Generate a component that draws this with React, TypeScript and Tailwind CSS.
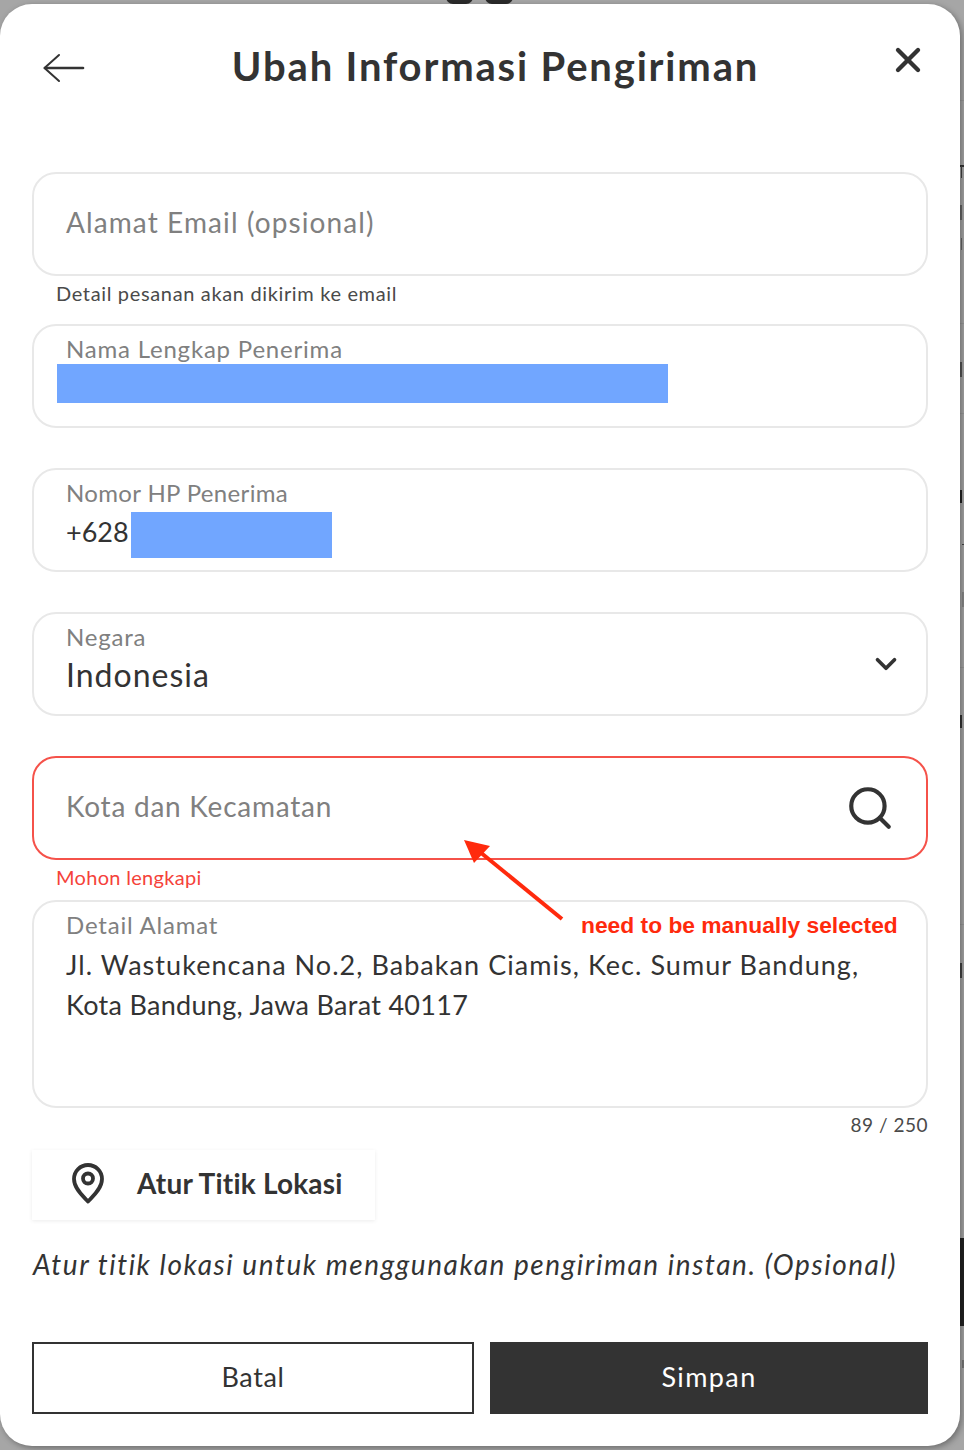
import { ChevronDown, Search, X } from 'lucide-react';

const font = "font-['Lato','Noto_Sans',sans-serif]";

// page text and rules that peek out to the right of the sheet
const edgeBits = [
  'top-[100px] h-[1px] w-[4px] bg-[#999999]',
  'top-[165px] h-[2px] w-[4px] bg-[#333333]',
  'top-[166px] left-[961px] h-[12px] w-[1px] bg-[#444444]',
  'top-[205px] h-[15px] w-[2px] bg-[#666666]',
  'top-[238px] left-[961px] h-[12px] w-[1px] bg-[#666666]',
  'top-[323px] h-[1px] w-[4px] bg-[#999999]',
  'top-[362px] h-[15px] w-[2px] bg-[#555555]',
  'top-[413px] h-[1px] w-[4px] bg-[#999999]',
  'top-[490px] h-[13px] w-[2px] bg-[#222222]',
  'top-[544px] left-[962px] h-[1px] w-[2px] bg-[#444444]',
  'top-[592px] left-[962px] h-[15px] w-[2px] bg-[#888888]',
  'top-[667px] h-[1px] w-[4px] bg-[#999999]',
  'top-[715px] h-[13px] w-[2px] bg-[#333333]',
  'top-[924px] h-[1px] w-[4px] bg-[#999999]',
  'top-[963px] h-[15px] w-[2px] bg-[#444444]',
  'top-[1360px] left-[962px] h-[8px] w-[2px] bg-[#777777]',
];

function Field({
  label,
  labelClass = 'tracking-[0.8px]',
  children,
  right,
  error,
  tall,
}: {
  label?: string;
  labelClass?: string;
  children?: React.ReactNode;
  right?: React.ReactNode;
  error?: boolean;
  tall?: boolean;
}) {
  return (
    <div
      className={`flex items-start justify-between rounded-[24px] border-2 bg-white ${tall ? 'h-[208px]' : 'h-[104px]'} ${
        error ? 'border-[#f5524a]' : 'border-[#e8e8e8]'
      }`}
    >
      <div className="min-w-0 flex-1 pl-[32px] pt-[9px]">
        {label && <div className={`text-[24px] leading-[28px] text-[#808080] ${labelClass}`}>{label}</div>}
        {children}
      </div>
      {right}
    </div>
  );
}

function Helper({ children, error }: { children: React.ReactNode; error?: boolean }) {
  return (
    <div
      className={`h-[48px] pl-[24px] pt-[5px] text-[20px] leading-[24px] ${
        error ? 'tracking-[0.3px] text-[#f5423a]' : 'tracking-[0.65px] text-[#4a4a4a]'
      }`}
    >
      {children}
    </div>
  );
}

export default function App() {
  return (
    <div className={`relative h-[1450px] w-[964px] overflow-hidden bg-[#a6a6a6] pt-[4px] ${font}`}>
      <div className="absolute left-[446px] top-[-10px] h-[14px] w-[27px] rounded-full bg-[#2b2b2b]" />
      <div className="absolute left-[485px] top-[-10px] h-[14px] w-[28px] rounded-full bg-[#2b2b2b]" />
      <div className="absolute left-[960px] top-[1238px] h-[88px] w-[4px] bg-[#222222]" />
      {edgeBits.map((bit) => (
        <div key={bit} className={`absolute left-[960px] ${bit}`} />
      ))}

      <div className="relative h-[1442px] w-[960px] rounded-[32px] bg-white shadow-[2px_2px_6px_rgba(0,0,0,0.35)]">
        <div className="relative flex h-[168px] justify-center pl-[31px]">
          <svg viewBox="0 0 44 32" className="absolute left-[42px] top-[48px] h-[32px] w-[44px]" fill="none" stroke="#333333" strokeLinecap="round" strokeLinejoin="round">
            <path d="M17 3 L2.5 16 L17 29" strokeWidth="2" />
            <path d="M3 16 H41" strokeWidth="2.6" />
          </svg>
          <h1 className="pt-[36px] text-[40px] font-bold leading-[52px] tracking-[1.82px] text-[#333333]">Ubah Informasi Pengiriman</h1>
          <X className="absolute right-[32px] top-[36px] h-[40px] w-[40px] text-[#333333]" strokeWidth={2.6} />
        </div>

        <div className="px-[32px]">
          <Field>
            <div className="pt-[20px] text-[28px] leading-[38px] tracking-[1.1px] text-[#808080]">Alamat Email (opsional)</div>
          </Field>
          <Helper>Detail pesanan akan dikirim ke email</Helper>

          <Field label="Nama Lengkap Penerima">
            <div className="ml-[-9px] mt-[1px] h-[39px] w-[611px] bg-[#71a6ff]" />
          </Field>
          <div className="h-[40px]" />

          <Field label="Nomor HP Penerima" labelClass="tracking-[0.35px]">
            <div className="mt-[5px] flex items-start">
              <span className="mt-[3px] text-[27px] leading-[34px] text-[#333333]">+628</span>
              <div className="ml-[2px] h-[46px] w-[201px] bg-[#71a6ff]" />
            </div>
          </Field>
          <div className="h-[40px]" />

          <Field
            label="Negara"
            right={<ChevronDown className="mr-[23px] mt-[33px] h-[34px] w-[34px] text-[#333333]" strokeWidth={2.6} />}
          >
            <div className="mt-[4px] text-[32px] leading-[40px] tracking-[1px] text-[#333333]">Indonesia</div>
          </Field>
          <div className="h-[40px]" />

          <Field
            error
            right={<Search className="mr-[31px] mt-[25px] h-[50px] w-[50px] text-[#333333]" strokeWidth={2} />}
          >
            <div className="pt-[20px] text-[28px] leading-[38px] tracking-[0.75px] text-[#808080]">Kota dan Kecamatan</div>
          </Field>
          <Helper error>Mohon lengkapi</Helper>

          <div className="mt-[-8px]">
            <Field label="Detail Alamat" tall>
              <div className="mt-[6px] text-[27px] leading-[40px] text-[#333333]">
                <div className="tracking-[1.05px]">Jl. Wastukencana No.2, Babakan Ciamis, Kec. Sumur Bandung,</div>
                <div className="tracking-[0.3px]">Kota Bandung, Jawa Barat 40117</div>
              </div>
            </Field>
          </div>
          <div className="pt-[5px] text-right text-[19px] leading-[24px] tracking-[0.5px] text-[#4a4a4a]">89 / 250</div>

          <div className="mt-[13px] flex h-[70px] w-[343px] items-center bg-white pb-[5px] pl-[39px] shadow-[0_1px_4px_rgba(0,0,0,0.08)]">
            <svg viewBox="0 0 34 42" className="h-[42px] w-[34px]" fill="none" stroke="#333333" strokeWidth="3.8" strokeLinejoin="round">
              <path d="M17 39.5 C13 35 3 27 3 17 A14 14 0 0 1 31 17 C31 27 21 35 17 39.5 Z" />
              <circle cx="17" cy="16.5" r="5" />
            </svg>
            <span className="ml-[32px] text-[28px] font-bold leading-[36px] tracking-[0.2px] text-[#333333]">Atur Titik Lokasi</span>
          </div>

          <div className="ml-[1px] mt-[26px] text-[28px] italic leading-[36px] tracking-[1.55px] text-[#333333]">
            Atur titik lokasi untuk menggunakan pengiriman instan. (Opsional)
          </div>

          <div className="mt-[60px] flex gap-[16px]">
            <button className="flex h-[72px] w-[442px] items-center justify-center border-2 border-[#333333] bg-white pb-[2px] text-[27px] tracking-[0.6px] text-[#333333]">
              Batal
            </button>
            <button className="flex h-[72px] flex-1 items-center justify-center bg-[#333333] pb-[2px] text-[27px] tracking-[1.4px] text-white">
              Simpan
            </button>
          </div>
        </div>
      </div>

      {/* annotation over the form */}
      <svg className="absolute left-[460px] top-[835px] h-[90px] w-[110px]" viewBox="0 0 110 90">
        <line x1="102" y1="84" x2="20" y2="17" stroke="#ff2a0d" strokeWidth="4" />
        <polygon points="4,5 30,11 14,28" fill="#ff2a0d" />
      </svg>
      <div className="absolute left-[581px] top-[911px] font-['Liberation_Sans',sans-serif] text-[22.8px] font-bold leading-[28px] text-[#ff2a0d]">
        need to be manually selected
      </div>
    </div>
  );
}
